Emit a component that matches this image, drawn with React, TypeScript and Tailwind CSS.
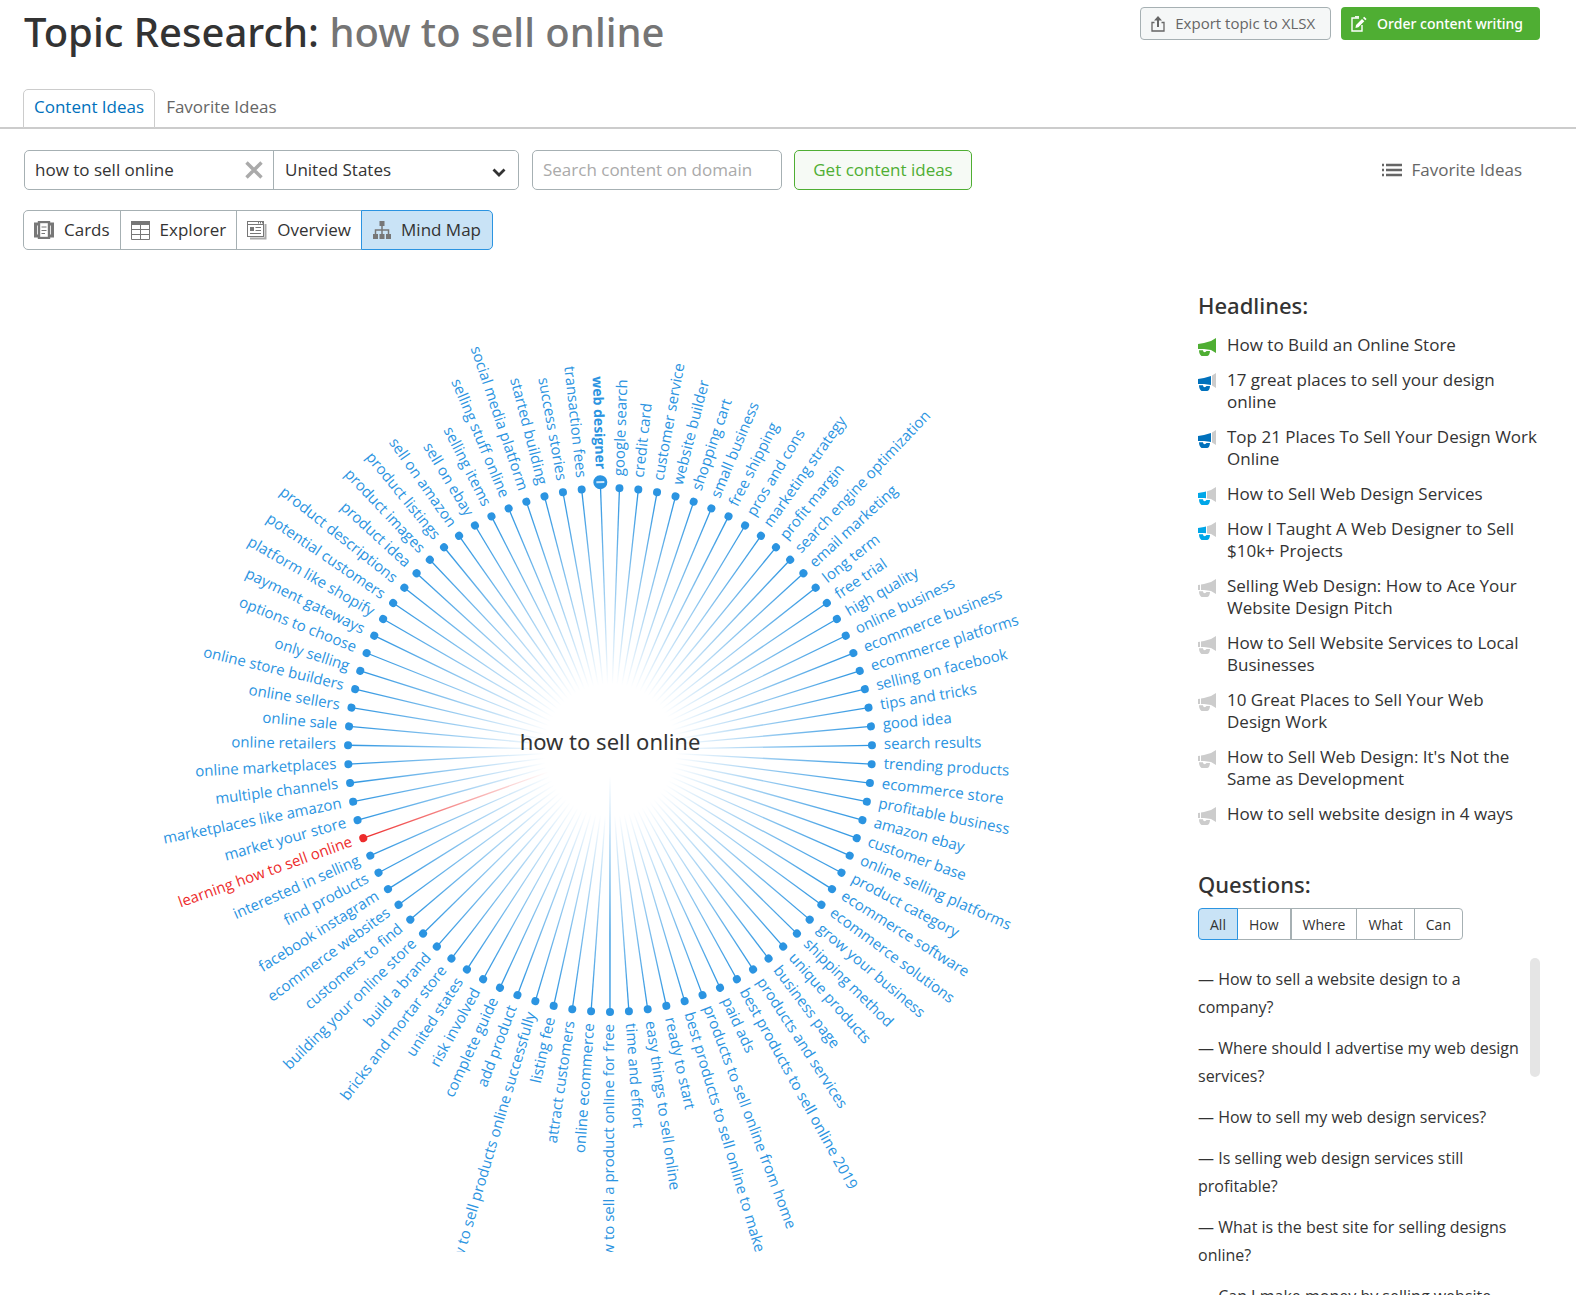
import React from 'react';

const TOPICS = [
  'google search',
  'credit card',
  'customer service',
  'website builder',
  'shopping cart',
  'small business',
  'free shipping',
  'pros and cons',
  'marketing strategy',
  'profit margin',
  'search engine optimization',
  'email marketing',
  'long term',
  'free trial',
  'high quality',
  'online business',
  'ecommerce business',
  'ecommerce platforms',
  'selling on facebook',
  'tips and tricks',
  'good idea',
  'search results',
  'trending products',
  'ecommerce store',
  'profitable business',
  'amazon ebay',
  'customer base',
  'online selling platforms',
  'product category',
  'ecommerce software',
  'ecommerce solutions',
  'grow your business',
  'shipping method',
  'unique products',
  'business page',
  'products and services',
  'best products to sell online 2019',
  'paid ads',
  'products to sell online from home',
  'best products to sell online to make',
  'ready to start',
  'easy things to sell online',
  'time and effort',
  'how to sell a product online for free',
  'online ecommerce',
  'attract customers',
  'listing fee',
  'how to sell products online successfully',
  'add product',
  'complete guide',
  'risk involved',
  'united states',
  'bricks and mortar store',
  'build a brand',
  'building your online store',
  'customers to find',
  'ecommerce websites',
  'facebook instagram',
  'find products',
  'interested in selling',
  'learning how to sell online',
  'market your store',
  'marketplaces like amazon',
  'multiple channels',
  'online marketplaces',
  'online retailers',
  'online sale',
  'online sellers',
  'online store builders',
  'only selling',
  'options to choose',
  'payment gateways',
  'platform like shopify',
  'potential customers',
  'product descriptions',
  'product idea',
  'product images',
  'product listings',
  'sell on amazon',
  'sell on ebay',
  'selling items',
  'selling stuff online',
  'social media platform',
  'started building',
  'success stories',
  'transaction fees',
  'web designer',
];

const VISITED = 'learning how to sell online';
const SELECTED = 'web designer';

type Level = 'top' | 'high' | 'mid' | 'low';

const HEADLINES: { text: string; level: Level }[] = [
  { text: 'How to Build an Online Store', level: 'top' },
  { text: '17 great places to sell your design online', level: 'high' },
  { text: 'Top 21 Places To Sell Your Design Work Online', level: 'high' },
  { text: 'How to Sell Web Design Services', level: 'mid' },
  { text: 'How I Taught A Web Designer to Sell $10k+ Projects', level: 'mid' },
  { text: 'Selling Web Design: How to Ace Your Website Design Pitch', level: 'low' },
  { text: 'How to Sell Website Services to Local Businesses', level: 'low' },
  { text: '10 Great Places to Sell Your Web Design Work', level: 'low' },
  { text: "How to Sell Web Design: It's Not the Same as Development", level: 'low' },
  { text: 'How to sell website design in 4 ways', level: 'low' },
];

const QUESTIONS = [
  'How to sell a website design to a company?',
  'Where should I advertise my web design services?',
  'How to sell my web design services?',
  'Is selling web design services still profitable?',
  'What is the best site for selling designs online?',
  'Can I make money by selling website designs?',
];

const LEVELS: Record<Level, { color: string; split: number }> = {
  top: { color: '#4fae33', split: 18 },
  high: { color: '#0071bc', split: 13 },
  mid: { color: '#00a6e8', split: 8 },
  low: { color: '#cccccc', split: 2 },
};

function Megaphone({ level }: { level: Level }) {
  const { color, split } = LEVELS[level];
  const horn = 'M0 6 L6 5 L13 3 L18 0 V15 L13 12 L6 11 H0 Z';
  return (
    <svg viewBox="0 0 18 18" className="mt-1 size-[18px] shrink-0" aria-hidden="true">
      <clipPath id={`${level}-on`}>
        <rect width={split} height="18" />
      </clipPath>
      <clipPath id={`${level}-off`}>
        <rect x={split + 1} width="18" height="18" />
      </clipPath>
      <path d={horn} fill={color} clipPath={`url(#${level}-on)`} />
      <path d={horn} fill="#cccccc" clipPath={`url(#${level}-off)`} />
      <path d="M1 12.2 H5 C5 14.4 7.5 14.8 8.5 13 H12 C12 16 10.5 18 9 18 H3.5 C2 17 1 15 1 12.2 Z" fill={color} />
    </svg>
  );
}

function CardsIcon() {
  return (
    <svg viewBox="0 0 20 18" className="h-[18px] w-5" aria-hidden="true">
      <path d="M4 3 H1.5 V15 H4 M16 3 H18.5 V15 H16" fill="none" stroke="#777" strokeWidth="3" />
      <rect x="5" y="1" width="10" height="16" fill="#fff" stroke="#777" strokeWidth="2.4" />
      <path d="M7.5 6 H12.5 M7.5 9.5 H12.5 M7.5 12.5 H11" stroke="#777" strokeWidth="1.2" />
    </svg>
  );
}

function ExplorerIcon() {
  return (
    <svg viewBox="0 0 19 19" className="size-[19px]" aria-hidden="true">
      <path d="M0 0 H19 V4 H0 Z" fill="#777" />
      <path d="M0.5 4 V18.5 H18.5 V4 M9.5 4 V18 M0 8.5 H19 M0 13.5 H19" fill="none" stroke="#777" />
    </svg>
  );
}

function OverviewIcon() {
  return (
    <svg viewBox="0 0 20 19" className="h-[19px] w-5" aria-hidden="true">
      <path d="M18.5 3 V17.5 H3" fill="none" stroke="#aaa" strokeWidth="2" />
      <rect x="0.5" y="0.5" width="16" height="15" fill="#fff" stroke="#777" />
      <path d="M0 3.5 H17" stroke="#777" />
      <path d="M11 1.8 H16" stroke="#777" strokeWidth="1.5" strokeDasharray="1 1" />
      <rect x="3" y="6" width="4" height="4" fill="#777" />
      <path d="M8.5 6.5 H14 M8.5 9.5 H14 M3 12.5 H14" stroke="#777" />
    </svg>
  );
}

function MindMapIcon() {
  return (
    <svg viewBox="0 0 18 18" className="size-[18px]" aria-hidden="true">
      <path d="M6.5 0 H11.5 V5 H6.5 Z M0 13 H5 V18 H0 Z M6.5 13 H11.5 V18 H6.5 Z M13 13 H18 V18 H13 Z" fill="#777" />
      <path d="M9 4 V14 M2.5 14 V9 H15.5 V14" fill="none" stroke="#777" strokeWidth="1.5" />
    </svg>
  );
}

const VIEWS = [
  { name: 'Cards', Icon: CardsIcon },
  { name: 'Explorer', Icon: ExplorerIcon },
  { name: 'Overview', Icon: OverviewIcon },
  { name: 'Mind Map', Icon: MindMapIcon },
];

function Branch({ label, index }: { label: string; index: number }) {
  const angle = ((index + 0.5) * 360) / TOPICS.length;
  const flipped = angle > 179.9;
  const vertical = Math.abs(angle - 180) < 0.1;
  const selected = label === SELECTED;
  const visited = label === VISITED;
  const color = visited ? '#ed2b2b' : '#2b94e1';
  const r = selected ? 268 : 262;
  const labelR = selected ? 281 : 274;
  const stroke = vertical ? 'url(#fade-short)' : visited ? 'url(#fade-red)' : 'url(#fade-blue)';

  return (
    <g transform={`rotate(${angle - 90})`}>
      <line x1="20" x2={r} y1="0" y2="0.01" stroke={stroke} strokeWidth="1.3" />
      <circle cx={r} r={selected ? 7 : 4} fill={color} />
      {selected && <rect x={r - 1} y="-4" width="2" height="8" fill="#cfe6f8" />}
      <text
        transform={flipped ? `translate(${labelR} 0) rotate(180)` : `translate(${labelR} 0)`}
        y="4"
        textAnchor={flipped ? 'end' : 'start'}
        fill={color}
        className={selected ? 'text-[14px] font-bold' : 'text-[15px]'}
      >
        {label}
      </text>
    </g>
  );
}

function MindMap() {
  return (
    <svg viewBox="-586 -500 1174 1002" className="h-[1002px] w-full" role="img" aria-label="Mind map">
      <defs>
        <radialGradient id="fade-blue" gradientUnits="userSpaceOnUse" cx="0" cy="0" r="262">
          <stop offset="0.25" stopColor="#2b94e1" stopOpacity="0" />
          <stop offset="1" stopColor="#2b94e1" />
        </radialGradient>
        <radialGradient id="fade-red" gradientUnits="userSpaceOnUse" cx="0" cy="0" r="262">
          <stop offset="0.25" stopColor="#ed2b2b" stopOpacity="0" />
          <stop offset="1" stopColor="#ed2b2b" />
        </radialGradient>
        <radialGradient id="fade-short" gradientUnits="userSpaceOnUse" cx="0" cy="0" r="262">
          <stop offset="0.1" stopColor="#2b94e1" stopOpacity="0" />
          <stop offset="0.7" stopColor="#2b94e1" />
        </radialGradient>
      </defs>
      {TOPICS.map((label, index) => (
        <Branch key={label} label={label} index={index} />
      ))}
      <text textAnchor="middle" className="fill-[#333] font-['Noto_Sans',sans-serif] text-[22px]">
        how to sell online
      </text>
    </svg>
  );
}

function Header() {
  return (
    <header className="flex items-start justify-between pr-9 pl-6">
      <h1 className="font-['Noto_Sans',sans-serif] text-[40px] leading-[64px] font-medium text-[#333]">
        Topic Research: <span className="text-[#757575]">how to sell online</span>
      </h1>
      <div className="flex gap-[10px] pt-[7px]">
        <button className="flex h-[33px] items-center gap-[10px] rounded border border-[#a6b0b3] bg-[#f5f7f7] pr-[15px] pl-[10px] text-[15px] text-[#666]">
          <svg viewBox="0 0 14 16" className="h-4 w-[14px]" aria-hidden="true">
            <path d="M3.5 6.5 H1 V15 H13 V6.5 H10.5" fill="none" stroke="#666" strokeWidth="1.3" />
            <path d="M7 0 L11 4.5 H8 V11 H6 V4.5 H3 Z" fill="#666" />
          </svg>
          Export topic to XLSX
        </button>
        <button className="flex h-[33px] items-center gap-2 rounded bg-[#4fae33] px-[10px] pr-[17px] font-['Noto_Sans',sans-serif] text-[14px] font-medium text-white">
          <svg viewBox="0 0 16 16" className="mr-[2px] size-4" aria-hidden="true">
            <path d="M8 2 H1 V15 H11 V9" fill="none" stroke="#fff" strokeWidth="1.4" />
            <path d="M4 0.8 H8" stroke="#fff" strokeWidth="1.4" />
            <path d="M4.5 12 L5 9 L11 3 L13.3 5.3 L7.4 11.3 Z M12 2 L13.2 0.8 L15.6 3.1 L14.3 4.3 Z" fill="#fff" />
          </svg>
          Order content writing
        </button>
      </div>
    </header>
  );
}

export default function App() {
  return (
    <div className="flex h-screen flex-col overflow-hidden bg-white font-['Open_Sans',sans-serif] text-[17px] text-[#333]">
      <Header />

      <nav className="mt-[25px] flex border-b-2 border-[#ccc] pl-[23px]">
        <a
          href="#content"
          className="-mb-px flex h-[39px] items-center rounded-t-[5px] border border-[#ccc] bg-white px-[10px] pb-1 text-[#0071bc]"
        >
          Content Ideas
        </a>
        <a href="#favorites" className="flex h-[38px] items-center px-[11px] pb-[3px] text-[#666]">
          Favorite Ideas
        </a>
      </nav>

      {/* Filters */}
      <form className="mt-[21px] flex items-center pr-[54px] pl-6" onSubmit={(e) => e.preventDefault()}>
        <div className="flex h-10 w-[495px] rounded-[5px] border border-[#a6b0b3]">
          <div className="flex w-[249px] items-center border-r border-[#a6b0b3] px-[10px]">
            <input aria-label="Topic" defaultValue="how to sell online" className="w-full min-w-0 outline-none" />
            <button type="button" aria-label="Clear topic">
              <svg viewBox="0 0 18 18" className="size-[18px]" aria-hidden="true">
                <path d="M1.5 1.5 L16.5 16.5 M16.5 1.5 L1.5 16.5" stroke="#aaa" strokeWidth="3.4" />
              </svg>
            </button>
          </div>
          <div className="relative flex flex-1">
            <select aria-label="Country" className="w-full appearance-none rounded-r-[5px] bg-white pl-[11px] outline-none">
              <option>United States</option>
            </select>
            <svg viewBox="0 0 14 9" className="pointer-events-none absolute top-[17px] right-3 h-[9px] w-[14px]" aria-hidden="true">
              <path d="M1.5 1.5 L7 7 L12.5 1.5" fill="none" stroke="#333" strokeWidth="2.8" />
            </svg>
          </div>
        </div>
        <input
          aria-label="Domain"
          placeholder="Search content on domain"
          className="ml-[13px] h-10 w-[250px] rounded-[5px] border border-[#a6b0b3] px-[10px] pb-[2px] outline-none placeholder:text-[#aaa]"
        />
        <button className="ml-3 h-10 w-[178px] rounded-[5px] border border-[#4fae33] bg-[#f6faf5] text-[#4fae33]">
          Get content ideas
        </button>
        <a href="#favorites" className="ml-auto flex items-center gap-[10px] text-[#666]">
          <svg viewBox="0 0 20 14" className="h-[14px] w-5" aria-hidden="true">
            <path d="M0 2 H2 M4 2 H20 M0 7 H2 M4 7 H20 M0 12 H2 M4 12 H20" stroke="#666" strokeWidth="2.4" />
          </svg>
          Favorite Ideas
        </a>
      </form>

      {/* View switch */}
      <div className="mt-5 flex pl-[23px]">
        {VIEWS.map(({ name, Icon }) => (
          <button
            key={name}
            aria-pressed={name === 'Mind Map'}
            className="-mr-px flex h-10 items-center gap-[10px] border border-[#a6b0b3] px-[10px] first:rounded-l-[5px] last:rounded-r-[5px] last:px-[11px] aria-pressed:border-[#2b94e1] aria-pressed:bg-[#c9e3f6]"
          >
            <Icon />
            {name}
          </button>
        ))}
      </div>

      <main className="flex min-h-0 flex-1 pr-9 pl-6">
        <div className="min-w-0 flex-1">
          <MindMap />
        </div>

        <aside className="flex w-[342px] shrink-0 flex-col pt-[41px]">
          <h2 className="font-['Noto_Sans',sans-serif] text-[22px] leading-7 font-medium">Headlines:</h2>
          <ul className="mt-[15px] flex flex-col gap-[13px]">
            {HEADLINES.map(({ text, level }) => (
              <li key={text} className="flex gap-[11px] leading-[22px]">
                <Megaphone level={level} />
                <a href="#headline">{text}</a>
              </li>
            ))}
          </ul>

          <h2 className="mt-[45px] font-['Noto_Sans',sans-serif] text-[22px] leading-7 font-medium">Questions:</h2>
          <div className="mt-[10px] flex shrink-0">
            {['All', 'How', 'Where', 'What', 'Can'].map((name) => (
              <button
                key={name}
                aria-pressed={name === 'All'}
                className="-mr-px h-8 border border-[#a6b0b3] px-[11px] text-[14px] first:rounded-l last:rounded-r nth-2:mr-0 aria-pressed:z-1 aria-pressed:border-[#2b94e1] aria-pressed:bg-[#c9e3f6]"
              >
                {name}
              </button>
            ))}
          </div>
          <div className="mt-[18px] flex min-h-0 flex-1 gap-[6px] overflow-hidden">
            <ul className="flex flex-1 flex-col gap-[13px] pt-[7px] text-[16px] leading-7">
              {QUESTIONS.map((question) => (
                <li key={question}>{`— ${question}`}</li>
              ))}
            </ul>
            <div className="h-[119px] w-[10px] shrink-0 rounded-full bg-[#e5e5e5]" />
          </div>
        </aside>
      </main>
    </div>
  );
}
